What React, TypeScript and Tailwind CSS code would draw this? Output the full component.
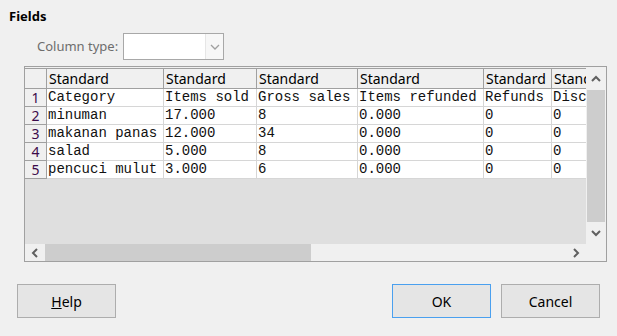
import type { ReactNode } from "react";

const cols = [22, 117, 93, 101, 126, 68, 68];

const rows = [
    ["Category", "Items sold", "Gross sales", "Items refunded", "Refunds", "Discounts"],
    ["minuman", "17.000", "8", "0.000", "0", "0"],
    ["makanan panas", "12.000", "34", "0.000", "0", "0"],
    ["salad", "5.000", "8", "0.000", "0", "0"],
    ["pencuci mulut", "3.000", "6", "0.000", "0", "0"],
];

function Chevron({ dir }: { dir: "up" | "down" | "left" | "right" }) {
    const d = {
        up: "M2 8 L6 4 L10 8",
        down: "M2 4 L6 8 L10 4",
        left: "M8 2 L4 6 L8 10",
        right: "M4 2 L8 6 L4 10",
    }[dir];
    return (
        <svg width="12" height="12" viewBox="0 0 12 12">
            <path d={d} fill="none" stroke="#606060" strokeWidth="2" />
        </svg>
    );
}

function Button({ children, focused }: { children: ReactNode; focused?: boolean }) {
    return (
        <div
            className={`flex h-[34px] w-[99px] items-center justify-center border bg-[#e5e5e5] text-[14px] text-black ${
                focused ? "border-[#4aa0ef]" : "border-[#adadad]"
            }`}
        >
            {children}
        </div>
    );
}

export default function App() {
    const sans = { fontFamily: '"Noto Sans", "Open Sans", sans-serif' };
    return (
        <div className="relative h-[336px] w-[617px] overflow-hidden bg-[#f0f0f0]" style={sans}>
            <div className="pl-[9px] pt-[7px] text-[13px] font-bold leading-[18px] text-black">Fields</div>

            <div className="mt-[8px] flex items-center pl-[37px]">
                <span className="w-[86px] text-[13px] text-[#6d6d6d]">Column type:</span>
                <div className="flex h-[27px] w-[101px] border border-[#a8a8a8] bg-white">
                    <div className="flex-1" />
                    <div className="flex w-[18px] items-center justify-center border-l border-[#e6e6e6] bg-[#f7f7f7]">
                        <svg width="10" height="8" viewBox="0 0 10 8">
                            <path d="M1 2 L5 6 L9 2" fill="none" stroke="#a0a0a0" strokeWidth="1.3" />
                        </svg>
                    </div>
                </div>
            </div>

            <div className="ml-[24px] mt-[6px] flex h-[196px] w-[583px] flex-col border border-[#a0a0a0] bg-[#f0f0f0] pt-[1px]">
                <div className="flex h-[176px]">
                    <div className="w-[561px] overflow-hidden bg-[#dfdfdf]">
                        <div className="flex h-[21px] w-max border-t border-[#a0a0a0] bg-[#f0f0f0] text-[14px] leading-[19px]">
                            {cols.map((w, i) => (
                                <div
                                    key={i}
                                    className="shrink-0 border-b border-r border-[#a0a0a0] pl-[2px] text-black"
                                    style={{ width: w }}
                                >
                                    {i === 0 ? "" : "Standard"}
                                </div>
                            ))}
                        </div>
                        {rows.map((r, ri) => (
                            <div key={ri} className="flex h-[18px] w-max">
                                <div
                                    className="flex shrink-0 items-end justify-center border-b border-r border-[#a0a0a0] bg-[#f0f0f0] text-[14px] leading-[17px] text-[#3c0a4a]"
                                    style={{ width: cols[0] }}
                                >
                                    {ri + 1}
                                </div>
                                {r.map((c, ci) => (
                                    <div
                                        key={ci}
                                        className="shrink-0 whitespace-pre border-b border-r border-[#d6d6d6] bg-white pl-[1px] text-[14px] leading-[17px] text-[#111]"
                                        style={{ width: cols[ci + 1], fontFamily: '"Liberation Mono", monospace' }}
                                    >
                                        {c}
                                    </div>
                                ))}
                            </div>
                        ))}
                    </div>
                    <div className="flex w-[20px] flex-col items-center">
                        <div className="flex h-[22px] items-center justify-center">
                            <Chevron dir="up" />
                        </div>
                        <div className="h-[132px] w-[18px] bg-[#cdcdcd]" />
                        <div className="flex h-[22px] items-center justify-center">
                            <Chevron dir="down" />
                        </div>
                    </div>
                </div>
                <div className="flex h-[18px] w-[561px] items-center">
                    <div className="flex w-[20px] justify-center">
                        <Chevron dir="left" />
                    </div>
                    <div className="h-[17px] w-[266px] bg-[#cdcdcd]" />
                    <div className="flex-1" />
                    <div className="flex w-[20px] justify-center">
                        <Chevron dir="right" />
                    </div>
                </div>
            </div>

            <div className="mt-[22px] flex items-center pl-[17px] pr-[17px]">
                <Button>
                    <span>
                        <span className="underline">H</span>elp
                    </span>
                </Button>
                <div className="flex-1" />
                <div className="flex gap-[10px]">
                    <Button focused>OK</Button>
                    <Button>Cancel</Button>
                </div>
            </div>
        </div>
    );
}
